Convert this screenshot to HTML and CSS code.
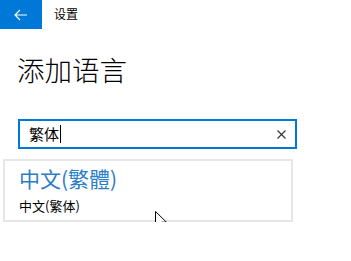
FILE: index.html
```html
<!DOCTYPE html>
<html lang="zh-CN">
<head>
<meta charset="utf-8">
<link rel="stylesheet" href="styles.css">
</head>
<body>
<div class="topbar">
  <div class="back">
    <svg width="14" height="12" viewBox="0 0 14 12"><path d="M6 1 L1 6 L6 11 M1 6 H13" fill="none" stroke="#fff" stroke-width="1.2"/></svg>
  </div>
  <div class="apptitle">设置</div>
</div>
<h1 class="title">添加语言</h1>
<div class="search">
  <span class="query">繁体</span><span class="caret"></span>
  <span class="clear">
    <svg width="9" height="9" viewBox="0 0 9 9"><path d="M0.5 0.5 L8.5 8.5 M8.5 0.5 L0.5 8.5" stroke="#333" stroke-width="1.1" fill="none"/></svg>
  </span>
</div>
<div class="results">
  <div class="native">中文(繁體)</div>
  <div class="local">中文(繁体)</div>
  <svg class="cursor" width="13" height="20" viewBox="0 0 13 20"><path d="M0.5 0.5 L0.5 15.5 L4 12 L6.5 18 L9 17 L6.5 11.2 L11.5 11.2 Z" fill="#fff" stroke="#000" stroke-width="1"/></svg>
</div>
</body>
</html>
```
FILE: styles.css
```css
html, body {
  margin: 0;
  padding: 0;
  background: #fff;
  font-family: "Noto Sans CJK SC", "Noto Sans", sans-serif;
  color: #000;
}
.topbar {
  display: flex;
  align-items: center;
  height: 29px;
}
.back {
  width: 42px;
  height: 29px;
  background: #0078d7;
  display: flex;
  align-items: center;
  justify-content: center;
}
.apptitle {
  margin-left: 12px;
  font-size: 12px;
  line-height: 12px;
  margin-top: -2px;
}
.title {
  margin: 24px 0 0 17px;
  font-size: 27.5px;
  line-height: 32px;
  font-weight: 300;
  height: 32px;
}
.search {
  box-sizing: border-box;
  margin: 34px 0 0 18px;
  width: 279px;
  height: 30px;
  border: 2px solid #0078d7;
  display: flex;
  align-items: center;
  padding-left: 9px;
  padding-right: 9px;
}
.query {
  font-size: 15px;
  line-height: 18px;
}
.caret {
  width: 1px;
  height: 18px;
  background: #000;
  margin-left: 1px;
}
.clear {
  margin-left: auto;
  display: flex;
}
.results {
  position: relative;
  box-sizing: border-box;
  margin: 10px 0 0 3px;
  width: 290px;
  height: 63px;
  border: 2px solid #e6e6e6;
  padding: 5px 0 0 14px;
}
.native {
  color: #2b7dc8;
  font-size: 21px;
  line-height: 25px;
}
.local {
  font-size: 13px;
  line-height: 16px;
  margin-top: 7px;
}
.cursor {
  position: absolute;
  left: 150px;
  top: 50px;
}
```
